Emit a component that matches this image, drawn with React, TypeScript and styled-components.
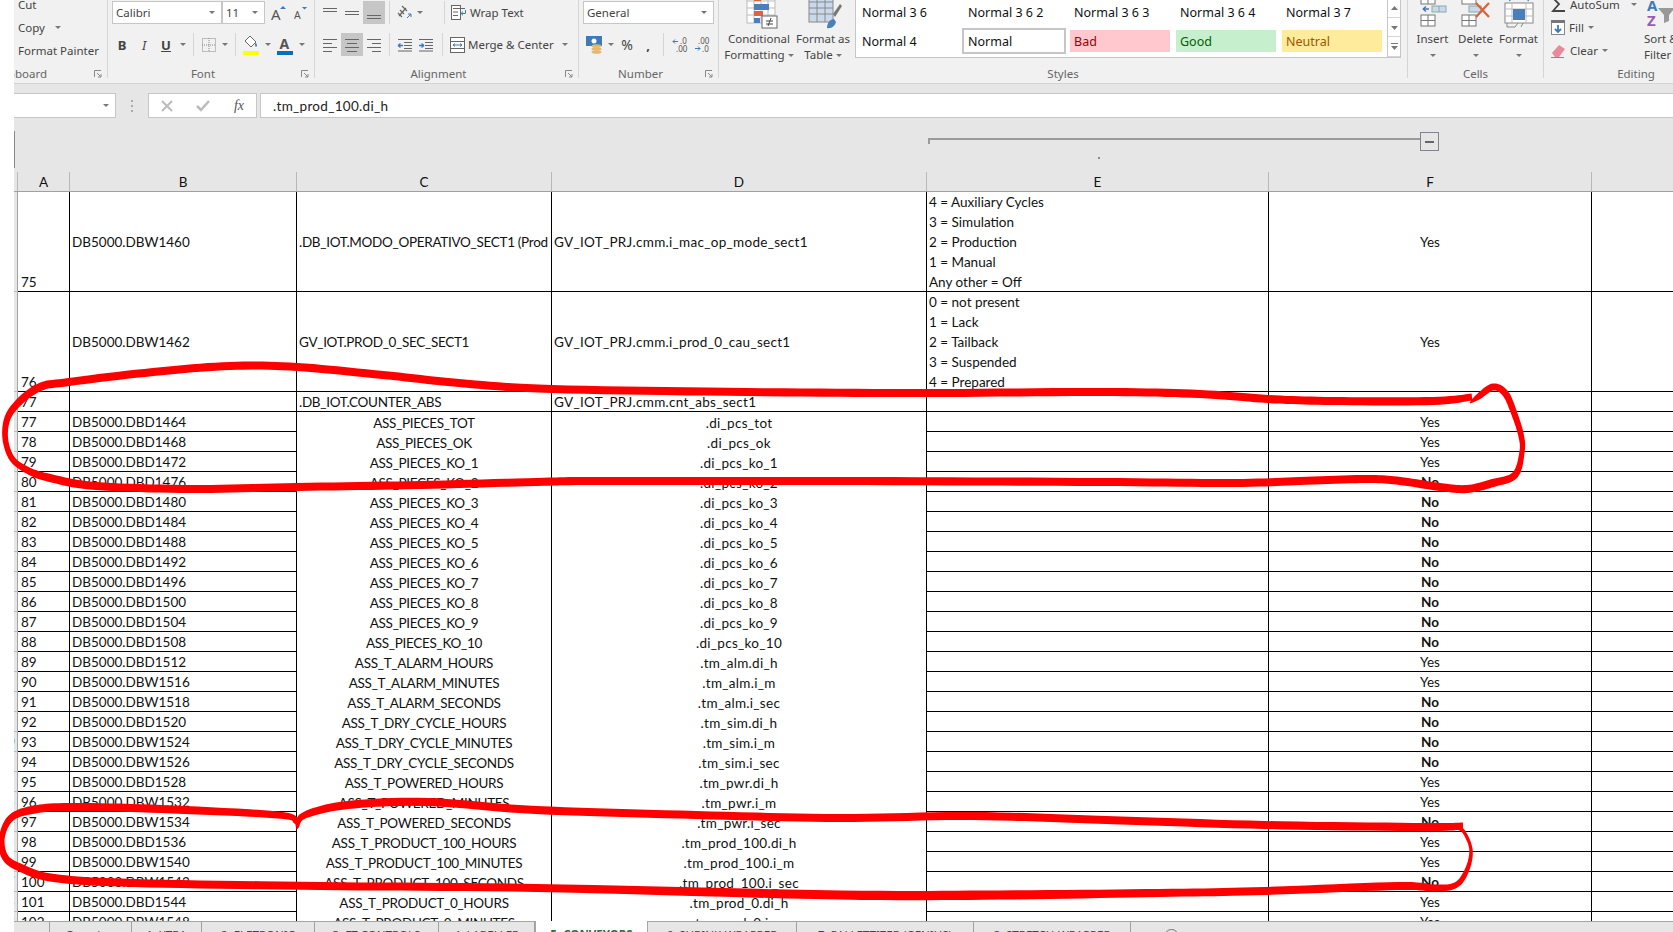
import React from "react";
import styled, { createGlobalStyle } from "styled-components";

const CELL_FONT = `"Lato", "Liberation Sans", sans-serif`;
const UI_FONT = `"Noto Sans", "Open Sans", sans-serif`;

const Global = createGlobalStyle`
  html, body { margin: 0; padding: 0; height: 932px; overflow: hidden; background: #fff; }
  * { box-sizing: border-box; }
`;

const App_ = styled.div`
  position: relative;
  width: 1673px;
  height: 943px;
  padding-left: 14px;
  display: flex;
  flex-direction: column;
  overflow: hidden;
  font-family: ${UI_FONT};
  font-size: 11.5px;
  color: #444;
`;

/* ---------- ribbon ---------- */
const Ribbon = styled.div`
  display: flex;
  height: 84px;
  background: #f1f1f1;
  border-bottom: 1px solid #d4d4d4;
  flex-shrink: 0;
  overflow: hidden;
`;
const Group = styled.section<{ $w: number; $last?: boolean }>`
  width: ${(p) => p.$w}px;
  height: 78px;
  flex-shrink: 0;
  display: flex;
  flex-direction: column;
  border-right: ${(p) => (p.$last ? "none" : "1px solid #d5d5d5")};
`;
const GroupBody = styled.div`
  flex: 1;
  min-height: 0;
  display: flex;
  overflow: hidden;
`;
const GroupLabel = styled.div<{ $launch?: boolean }>`
  height: 14px;
  margin-bottom: -3px;
  padding-right: ${(p) => (p.$launch ? 16 : 0)}px;
  display: grid;
  grid-template-columns: 1fr auto 1fr;
  align-items: center;
  color: #666;
  line-height: 14px;
  white-space: nowrap;
`;
const LabelText = styled.span`
  grid-column: 2;
`;
const ClippedLabel = styled.span`
  grid-column: 1 / 3;
  overflow: hidden;
  width: 33px;
  direction: rtl;
`;
const Launcher = styled.svg`
  grid-column: 3;
  justify-self: end;
  margin-right: -11px;
  width: 8px;
  height: 8px;
`;
const Column = styled.div<{ $ml?: number; $w?: number }>`
  display: flex;
  flex-direction: column;
  margin-left: ${(p) => p.$ml ?? 0}px;
  ${(p) => (p.$w ? `width: ${p.$w}px; flex-shrink: 0;` : "")}
`;
const ToolRow = styled.div<{ $mt?: number; $ml?: number }>`
  display: flex;
  align-items: center;
  height: 23px;
  margin-top: ${(p) => p.$mt ?? 0}px;
  margin-left: ${(p) => p.$ml ?? 0}px;
`;
const Tool = styled.span<{ $w?: number; $ml?: number; $on?: boolean }>`
  display: inline-flex;
  align-items: center;
  justify-content: center;
  flex-shrink: 0;
  height: 23px;
  width: ${(p) => (p.$w ? `${p.$w}px` : "auto")};
  margin-left: ${(p) => p.$ml ?? 0}px;
  background: ${(p) => (p.$on ? "#c6c6c6" : "transparent")};
  white-space: nowrap;
  color: #444;
`;
const Glyph = styled.span<{ $i?: boolean; $u?: boolean; $plain?: boolean }>`
  font-size: ${(p) => (p.$plain ? 14 : 13)}px;
  font-weight: ${(p) => (p.$i || p.$plain ? 400 : 700)};
  font-style: ${(p) => (p.$i ? "italic" : "normal")};
  text-decoration: ${(p) => (p.$u ? "underline" : "none")};
  color: #444;
`;
const Sep = styled.span<{ $ml?: number }>`
  width: 1px;
  height: 23px;
  flex-shrink: 0;
  margin-left: ${(p) => p.$ml ?? 0}px;
  background: #d5d5d5;
`;
const Caret = styled.span<{ $ml?: number }>`
  display: inline-block;
  flex-shrink: 0;
  width: 0;
  height: 0;
  margin-left: ${(p) => p.$ml ?? 0}px;
  border-left: 3px solid transparent;
  border-right: 3px solid transparent;
  border-top: 3px solid #777;
`;
const ComboBox = styled.div<{ $w: number; $ml?: number }>`
  width: ${(p) => p.$w}px;
  height: 23px;
  flex-shrink: 0;
  margin-left: ${(p) => p.$ml ?? 0}px;
  display: flex;
  align-items: center;
  justify-content: space-between;
  padding: 0 6px 0 3px;
  background: #fff;
  border: 1px solid #c6c6c6;
  color: #444;
`;
const ListRow = styled.div<{ $first?: boolean }>`
  display: flex;
  align-items: center;
  gap: 4px;
  height: 23px;
  margin-top: ${(p) => (p.$first ? -7 : 0)}px;
  white-space: nowrap;
`;
const LargeButton = styled.div<{ $w: number; $ml?: number; $left?: boolean }>`
  width: ${(p) => p.$w}px;
  margin-left: ${(p) => p.$ml ?? 0}px;
  flex-shrink: 0;
  display: flex;
  flex-direction: column;
  align-items: ${(p) => (p.$left ? "flex-start" : "center")};
  text-align: ${(p) => (p.$left ? "left" : "center")};
  line-height: 16px;
  white-space: nowrap;
`;
const LargeIcon = styled.svg`
  height: 31px;
  width: 40px;
  flex-shrink: 0;
`;
const SortSlot = styled.span`
  display: flex;
  height: 31px;
  margin-left: 3px;
  flex-shrink: 0;
`;
const CaretLine = styled.div`
  height: 16px;
  display: flex;
  align-items: center;
  justify-content: center;
  gap: 3px;
`;
const Gallery = styled.div`
  margin-left: 6px;
  width: 546px;
  height: 58px;
  flex-shrink: 0;
  display: flex;
  background: #fff;
  border-left: 1px solid #c6c6c6;
  border-bottom: 1px solid #c6c6c6;
`;
const GalleryGrid = styled.div`
  display: grid;
  grid-template-columns: repeat(5, 100px);
  grid-auto-rows: 22px;
  column-gap: 6px;
  row-gap: 7px;
  padding: 1px 0 0 2px;
`;
const StyleTile = styled.div<{ $bg?: string; $fg?: string; $sel?: boolean }>`
  display: flex;
  align-items: center;
  padding-left: 4px;
  font-size: 12.5px;
  background: ${(p) => p.$bg ?? "transparent"};
  color: ${(p) => p.$fg ?? "#111"};
  box-shadow: ${(p) => (p.$sel ? "0 0 0 2px #c6c6c6" : "none")};
  white-space: nowrap;
`;
const GalleryScroll = styled.div`
  margin-left: 5px;
  width: 15px;
  height: 57px;
  display: grid;
  grid-template-rows: 18px 19px 20px;
  border-left: 1px solid #c6c6c6;
  border-right: 1px solid #c6c6c6;
`;
const ScrollBtn = styled.div`
  display: flex;
  align-items: center;
  justify-content: center;
  border-bottom: 1px solid #d5d5d5;
`;

/* ---------- formula bar ---------- */
const FormulaRow = styled.div`
  display: flex;
  align-items: stretch;
  height: 34px;
  padding-top: 9px;
  flex-shrink: 0;
  background: #e6e6e6;
`;
const NameBox = styled.div`
  width: 102px;
  background: #fff;
  border: 1px solid #c6c6c6;
  border-left: none;
  display: flex;
  align-items: center;
  justify-content: flex-end;
  padding-right: 6px;
`;
const Grip = styled.div`
  width: 32px;
  display: flex;
  align-items: center;
  justify-content: center;
  flex-direction: column;
  gap: 3px;
`;
const GripDot = styled.span`
  width: 2px;
  height: 2px;
  background: #aaa;
`;
const FxBox = styled.div`
  width: 109px;
  background: #fff;
  border: 1px solid #c6c6c6;
  display: grid;
  grid-template-columns: repeat(3, 36px);
  align-items: center;
  justify-items: center;
`;
const FxText = styled.span`
  font-family: "Liberation Serif", serif;
  font-style: italic;
  font-size: 14px;
  color: #555;
`;
const FormulaInput = styled.div`
  flex: 1;
  margin-left: 3px;
  padding-left: 12px;
  background: #fff;
  border: 1px solid #c6c6c6;
  border-right: none;
  display: flex;
  align-items: center;
  font-family: ${CELL_FONT};
  font-size: 13.5px;
  letter-spacing: 0.3px;
  color: #222;
`;

/* ---------- outline ---------- */
const OutlineArea = styled.div`
  height: 54px;
  flex-shrink: 0;
  background: #e6e6e6;
  display: flex;
`;
const OutlineEdge = styled.div`
  width: 1px;
  height: 37px;
  margin-top: 13px;
  background: #8a8a8a;
  flex-shrink: 0;
`;
const OutlineTrack = styled.div`
  flex-shrink: 0;
  display: flex;
  flex-direction: column;
  margin-left: 913px;
  margin-top: 20px;
`;
const OutlineRule = styled.div`
  width: 492px;
  height: 6px;
  border-top: 2px solid #9a9a9a;
  border-left: 2px solid #9a9a9a;
`;
const OutlineDot = styled.span`
  width: 2px;
  height: 2px;
  margin: 13px 0 0 170px;
  background: #8c8c8c;
`;
const CollapseBtn = styled.div`
  width: 19px;
  height: 19px;
  margin-top: 14px;
  border: 1px solid #83838f;
  display: flex;
  align-items: center;
  justify-content: center;
`;
const Minus = styled.span`
  width: 9px;
  height: 2px;
  background: #666;
`;

/* ---------- sheet ---------- */
const COLS = "4px 52px 227px 255px 375px 342px 323px 82px";
const HeaderRow = styled.div`
  display: grid;
  grid-template-columns: ${COLS};
  height: 20px;
  flex-shrink: 0;
  background: #e6e6e6;
  border-bottom: 1px solid #a0a0a0;
  font-family: ${CELL_FONT};
  font-size: 13.5px;
  color: #111;
`;
const HeaderCell = styled.div`
  display: flex;
  align-items: center;
  justify-content: center;
  border-right: 1px solid #b8b8b8;
`;
const Sheet = styled.div`
  flex: 1;
  min-height: 0;
  overflow: hidden;
  background: #fff;
`;
const Row = styled.div<{ $h: number }>`
  display: grid;
  grid-template-columns: ${COLS};
  grid-template-rows: minmax(0, 1fr);
  height: ${(p) => p.$h}px;
  font-family: ${CELL_FONT};
  font-size: 13.5px;
  line-height: 17px;
  color: #111;
  background: #fff;
`;
const Strip = styled.div`
  background: #e6e6e6;
  border-right: 1px solid #a4a4a4;
  border-bottom: 1px solid #bcbcbc;
  overflow: hidden;
  font-size: 13px;
  line-height: 19px;
  text-indent: -7px;
  color: #222;
`;
const RowNo = styled.div`
  display: flex;
  align-items: flex-end;
  padding-left: 3px;
  line-height: 18px;
  border-right: 1px solid #000;
  border-bottom: 1px solid #000;
`;
const Cell = styled.div<{ $center?: boolean; $open?: boolean; $track?: number }>`
  display: flex;
  align-items: center;
  justify-content: ${(p) => (p.$center ? "center" : "flex-start")};
  padding: ${(p) => (p.$center ? "2px 0 0" : "2px 0 0 2px")};
  border-right: 1px solid #000;
  border-bottom: ${(p) => (p.$open ? "none" : "1px solid #000")};
  overflow: hidden;
  white-space: nowrap;
  min-width: 0;
  letter-spacing: ${(p) => p.$track ?? 0}px;
`;
const NoteCell = styled.div`
  display: flex;
  flex-direction: column;
  align-items: flex-start;
  padding-left: 2px;
  line-height: 20px;
  border-right: 1px solid #000;
  border-bottom: 1px solid #000;
  overflow: hidden;
  white-space: nowrap;
`;
const Blank = styled.div`
  border-bottom: 1px solid #000;
`;
const Answer = styled.span<{ $no?: boolean }>`
  font-weight: ${(p) => (p.$no ? 700 : 400)};
`;

/* ---------- tabs ---------- */
const TabBar = styled.div`
  height: 22px;
  flex-shrink: 0;
  display: flex;
  background: #e6e6e6;
  border-top: 1px solid #a6a6a6;
  font-size: 11.5px;
  color: #444;
`;
const Tab = styled.div<{ $w: number; $active?: boolean }>`
  width: ${(p) => p.$w}px;
  flex-shrink: 0;
  display: flex;
  justify-content: center;
  padding-top: ${(p) => (p.$active ? 6 : 5)}px;
  margin-top: ${(p) => (p.$active ? -1 : 0)}px;
  line-height: 16px;
  white-space: nowrap;
  background: ${(p) => (p.$active ? "#fff" : "transparent")};
  color: ${(p) => (p.$active ? "#217346" : "#444")};
  font-weight: ${(p) => (p.$active ? 700 : 400)};
  border-left: ${(p) => (p.$active ? "1px solid #a6a6a6" : "none")};
  border-right: 1px solid ${(p) => (p.$active ? "#a6a6a6" : "#a0a0a0")};
`;
const AddSheet = styled.span`
  width: 15px;
  height: 15px;
  margin: 7px 0 0 33px;
  border: 1px solid #777;
  border-radius: 50%;
  flex-shrink: 0;
`;

/* ---------- ink ---------- */
const Ink = styled.svg`
  position: absolute;
  left: 0;
  top: 0;
  width: 1673px;
  height: 932px;
  pointer-events: none;
`;

/* ---------- icons ---------- */
const Lines = ({ ys, xs }: { ys: number[]; xs: [number, number][] }) => (
  <svg width="16" height="16" viewBox="0 0 16 16" fill="none" stroke="#666" strokeWidth="1">
    {ys.map((y, i) => (
      <line key={i} x1={xs[i][0]} x2={xs[i][1]} y1={y + 0.5} y2={y + 0.5} />
    ))}
  </svg>
);
const wide: [number, number][] = [[1, 15], [1, 15], [1, 15]];
const leftAl: [number, number][] = [[1, 15], [1, 10], [1, 15], [1, 10]];
const centerAl: [number, number][] = [[1, 15], [3, 13], [1, 15], [3, 13]];
const rightAl: [number, number][] = [[1, 15], [6, 15], [1, 15], [6, 15]];

const GrowFont = ({ down }: { down?: boolean }) => (
  <svg width="16" height="18" viewBox="0 0 16 18">
    <text x="0" y="16" fontFamily="Noto Sans" fontSize={down ? 12 : 15} fill="#555">A</text>
    <path d={down ? "M9 2h6l-3 3z" : "M9 5h6l-3-3z"} fill="#3f7ab8" />
  </svg>
);
const BorderIcon = () => (
  <svg width="14" height="14" viewBox="0 0 14 14" fill="none" stroke="#888" strokeDasharray="1 1">
    <rect x=".5" y=".5" width="13" height="13" />
    <path d="M7 0v14M0 7h14" />
  </svg>
);
const FillIcon = () => (
  <svg width="16" height="20" viewBox="0 0 16 20">
    <path d="M7 1l6 6-5 5-6-6z" fill="#fff" stroke="#666" />
    <path d="M12.500 7.500c1.500 2 2 3 1 4s-2-1-1-4z" fill="#3f7ab8" />
    <rect x="0" y="16" width="16" height="4" fill="#ffff00" />
  </svg>
);
const ColorA = () => (
  <svg width="16" height="20" viewBox="0 0 16 20">
    <text x="2.500" y="14" fontFamily="Noto Sans" fontWeight="700" fontSize="14" fill="#555">A</text>
    <rect x="0" y="16" width="16" height="4" fill="#0a6ebd" />
  </svg>
);
const Orient = () => (
  <svg width="16" height="16" viewBox="0 0 16 16" fill="none" stroke="#666">
    <path d="M2 11L9 3M5 1l5 5" strokeWidth="1.200" />
    <path d="M3 5l4 4M1 8l4 4" strokeWidth="1.200" />
    <path d="M10 13l4-4m0 0h-3m3 0v3" stroke="#3f7ab8" />
  </svg>
);
const Indent = ({ out }: { out?: boolean }) => (
  <svg width="16" height="14" viewBox="0 0 16 14" fill="none" stroke="#666">
    <path d="M1 1.500h14M7 4.500h8M7 7.500h8M7 10.500h8M1 13h14" />
    <path d={out ? "M1 7.500h5M1 7.500l2.500-2M1 7.500l2.500 2" : "M1 7.500h5M6 7.500l-2.500-2M6 7.500l-2.500 2"} stroke="#3f7ab8" strokeWidth="1.300" />
  </svg>
);
const WrapIcon = () => (
  <svg width="16" height="15" viewBox="0 0 16 15" fill="none" stroke="#666">
    <rect x=".5" y=".5" width="9" height="14" fill="#fff" />
    <path d="M2 3.500h12M2 7h5M2 10.500h5" />
    <path d="M14.500 5v3.500H10m0 0l2-1.800M10 8.500l2 1.800" stroke="#3f7ab8" />
  </svg>
);
const MergeIcon = () => (
  <svg width="15" height="16" viewBox="0 0 15 16" fill="none" stroke="#666">
    <rect x=".5" y=".5" width="14" height="15" fill="#fff" />
    <path d="M.5 4.500h14M.5 11.500h14" />
    <path d="M3 8h9M3 8l2-1.500M3 8l2 1.500M12 8l-2-1.500M12 8l-2 1.500" stroke="#3f7ab8" />
  </svg>
);
const MoneyIcon = () => (
  <svg width="17" height="18" viewBox="0 0 17 18">
    <rect x="0" y="0" width="16" height="10" fill="#3f7ab8" />
    <circle cx="8" cy="5" r="2.500" fill="#fff" />
    <ellipse cx="10.500" cy="10" rx="5" ry="1.800" fill="#e8b86a" />
    <ellipse cx="10.500" cy="13" rx="5" ry="1.800" fill="#e8b86a" />
    <ellipse cx="10.500" cy="16" rx="5" ry="1.800" fill="#e8b86a" />
  </svg>
);
const DecIcon = ({ flip }: { flip?: boolean }) => (
  <svg width="16" height="16" viewBox="0 0 16 16" fontFamily="Noto Sans" fontSize="8" fill="#555">
    {flip ? (
      <>
        <text x="4" y="7">.00</text>
        <text x="8" y="15">.0</text>
        <path d="M1 11.500h5M6 11.500l-2-2M6 11.500l-2 2" stroke="#3f7ab8" fill="none" />
      </>
    ) : (
      <>
        <text x="8" y="7">.0</text>
        <text x="4" y="15">.00</text>
        <path d="M1 4.500h5M1 4.500l2-2M1 4.500l2 2" stroke="#3f7ab8" fill="none" />
      </>
    )}
  </svg>
);
const ScrollGlyph = ({ kind }: { kind: "up" | "down" | "more" }) => (
  <svg width="9" height="9" viewBox="0 0 9 9" fill="#777">
    {kind === "up" && <path d="M1 6h7L4.500 2z" />}
    {kind === "down" && <path d="M1 3h7L4.500 7z" />}
    {kind === "more" && (
      <>
        <path d="M1 1h7v1H1z" />
        <path d="M1 4h7L4.500 8z" />
      </>
    )}
  </svg>
);
const LauncherGlyph = () => (
  <Launcher viewBox="0 0 8 8" fill="none" stroke="#888">
    <path d="M.5 7V.5H7" />
    <path d="M3 3l4 4M7 4v3H4" />
  </Launcher>
);
const CondIcon = () => (
  <LargeIcon viewBox="0 0 40 31">
    <g fill="#fff" stroke="#bbb">
      <rect x="8" y="-6" width="28" height="29" />
      <path d="M15 -6v29M22 -6v29M29 -6v29M8 1h28M8 8h28M8 15h28" />
    </g>
    <rect x="15" y="-5" width="7" height="6" fill="#e0633c" />
    <rect x="15" y="4" width="15" height="6" fill="#4a7fbc" />
    <rect x="15" y="11" width="9" height="5" fill="#e0633c" />
    <rect x="15" y="18" width="6" height="5" fill="#4a7fbc" />
    <rect x="23" y="16" width="15" height="12" fill="#fff" stroke="#666" />
    <path d="M27 21h7M27 24h7M32 18l-3 8" stroke="#444" fill="none" />
  </LargeIcon>
);
const TableIcon = () => (
  <LargeIcon viewBox="0 0 40 31">
    <rect x="6" y="-4" width="24" height="26" fill="#c9d9ec" stroke="#888" />
    <path d="M6 2h24M6 8h24M6 14h24M14 -4v26M22 -4v26" stroke="#888" fill="none" />
    <path d="M30 14l7-10 2 2-7 11z" fill="#777" />
    <path d="M24 28c0-6 4-9 7-9l2 3c-1 4-5 7-9 6z" fill="#4a7fbc" />
  </LargeIcon>
);
const InsertIcon = () => (
  <LargeIcon viewBox="0 0 40 31">
    <g fill="#fff" stroke="#777">
      <rect x="8" y="-6" width="14" height="10" />
      <path d="M15 -6v10" />
      <rect x="8" y="15" width="14" height="11" />
      <path d="M15 15v11M8 20.500h14" />
    </g>
    <rect x="19" y="6" width="14" height="6" fill="#c9d9ec" stroke="#8aa" />
    <path d="M26 6v6" stroke="#8aa" />
    <path d="M10 9h6M10 9l3-2.500M10 9l3 2.500" stroke="#3f7ab8" strokeWidth="1.500" fill="none" />
  </LargeIcon>
);
const DeleteIcon = () => (
  <LargeIcon viewBox="0 0 40 31">
    <g fill="#fff" stroke="#777">
      <rect x="6" y="-6" width="14" height="10" />
      <rect x="6" y="15" width="14" height="11" />
      <path d="M13 15v11M6 20.500h14" />
    </g>
    <rect x="13" y="6" width="12" height="6" fill="#c9d9ec" stroke="#8aa" />
    <path d="M20 3l13 14M33 3L20 17" stroke="#d9603a" strokeWidth="2.200" />
  </LargeIcon>
);
const FormatIcon = () => (
  <LargeIcon viewBox="0 0 40 31">
    <rect x="6" y="3" width="28" height="20" fill="#fff" stroke="#888" />
    <path d="M13 3v20M27 3v20M6 9h28M6 16h28" stroke="#bbb" />
    <rect x="14" y="9" width="12" height="11" fill="#4a7fbc" />
    <path d="M10 1l3-2M30 1l-3-2" stroke="#3f7ab8" />
    <path d="M8 23v4h8l3-4M24 23l-2 4" fill="none" stroke="#888" />
  </LargeIcon>
);
const SigmaIcon = () => (
  <svg width="15" height="15" viewBox="0 0 15 15" fill="none" stroke="#444" strokeWidth="1.800">
    <path d="M14 1H2l6 6-6 7h12" />
  </svg>
);
const FillDown = () => (
  <svg width="14" height="15" viewBox="0 0 14 15">
    <rect x=".5" y=".5" width="13" height="14" fill="#fff" stroke="#888" />
    <rect x="0" y="0" width="14" height="3" fill="#777" />
    <path d="M7 5v7M4 9l3 3 3-3" stroke="#3f7ab8" strokeWidth="1.800" fill="none" />
  </svg>
);
const Eraser = () => (
  <svg width="15" height="14" viewBox="0 0 15 14">
    <path d="M1 9l7-8 6 4-6 8H4z" fill="#e88a9a" />
    <path d="M0 13.500h13" stroke="#888" />
  </svg>
);
const SortIcon = () => (
  <svg width="30" height="27" viewBox="0 0 30 27" fontFamily="Noto Sans" fontWeight="700" fontSize="15">
    <text x="0" y="11" fill="#3f7ab8">A</text>
    <text x="0" y="26" fill="#9b59b6">Z</text>
    <path d="M11 8h17l-6 7v6l-5 2v-8z" fill="#999" />
  </svg>
);
const SmallX = () => (
  <svg width="12" height="12" viewBox="0 0 12 12" stroke="#bbb" strokeWidth="2" fill="none">
    <path d="M1 1l10 10M11 1L1 11" />
  </svg>
);
const SmallCheck = () => (
  <svg width="14" height="12" viewBox="0 0 14 12" stroke="#bbb" strokeWidth="2.500" fill="none">
    <path d="M1 6l4 4 8-9" />
  </svg>
);

/* ---------- ink strokes ---------- */
type P = [number, number, number];

function ribbonPath(points: P[]): string {
  const samples: P[] = [];
  for (let i = 0; i < points.length - 1; i++) {
    const p0 = points[Math.max(i - 1, 0)];
    const p1 = points[i];
    const p2 = points[i + 1];
    const p3 = points[Math.min(i + 2, points.length - 1)];
    for (let s = 0; s < 10; s++) {
      const t = s / 10;
      const t2 = t * t;
      const t3 = t2 * t;
      const f = (k: number) =>
        0.5 *
        (2 * p1[k] +
          (-p0[k] + p2[k]) * t +
          (2 * p0[k] - 5 * p1[k] + 4 * p2[k] - p3[k]) * t2 +
          (-p0[k] + 3 * p1[k] - 3 * p2[k] + p3[k]) * t3);
      samples.push([f(0), f(1), f(2)]);
    }
  }
  samples.push(points[points.length - 1]);
  const left: string[] = [];
  const right: string[] = [];
  samples.forEach((p, i) => {
    const a = samples[Math.max(i - 1, 0)];
    const b = samples[Math.min(i + 1, samples.length - 1)];
    const dx = b[0] - a[0];
    const dy = b[1] - a[1];
    const len = Math.hypot(dx, dy) || 1;
    const w = p[2] * 1.15;
    const nx = (-dy / len) * (w / 2);
    const ny = (dx / len) * (w / 2);
    left.push(`${(p[0] + nx).toFixed(1)} ${(p[1] + ny).toFixed(1)}`);
    right.unshift(`${(p[0] - nx).toFixed(1)} ${(p[1] - ny).toFixed(1)}`);
  });
  return `M${left.join("L")}L${right.join("L")}Z`;
}

const upperLoop: P[] = [
  [1470, 403, 1], [1478, 397, 5], [1493, 387, 6], [1505, 393, 6], [1513, 410, 5.5], [1521, 435, 5], [1522, 452, 4.5],
  [1515, 475, 6], [1493, 483, 7], [1467, 489, 7], [1440, 487, 7], [1400, 481, 7], [1367, 479, 7], [1300, 481, 7],
  [1233, 483, 7], [1100, 482, 7], [840, 481, 7], [600, 481, 7], [536, 482, 7], [421, 485, 7], [297, 487, 7],
  [191, 489, 7], [96, 486, 7], [50, 478, 7], [27, 470, 6], [11, 457, 5], [5, 433, 5], [12, 410, 6],
  [38, 388, 7], [69, 382, 7], [153, 372, 7], [230, 366, 7], [297, 367, 7], [383, 375, 7], [459, 383, 7],
  [552, 389, 7], [747, 392, 7], [926, 393, 7], [1100, 392, 7], [1200, 394, 7], [1268, 399, 7], [1333, 401, 7], [1433, 401, 7], [1472, 397, 6],
];
const lowerLoop: P[] = [
  [297, 829, 1], [296, 822, 4], [278, 815, 6], [161, 809, 7], [70, 807, 7], [32, 810, 7], [11, 818, 6], [2, 837, 5],
  [5, 857, 6], [21, 868, 7], [54, 878, 7], [134, 883, 7], [321, 886, 7], [536, 888, 7], [840, 895, 8], [999, 895, 8],
  [1159, 893, 7], [1265, 891, 7], [1398, 886, 7], [1435, 888, 6], [1456, 885, 5], [1467, 870, 4], [1471, 850, 3], [1464, 832, 3], [1456, 827, 4],
];
const lowerTop: P[] = [
  [1463, 826, 6], [1424, 827, 7], [1265, 825, 7], [1106, 820, 7], [973, 816, 7], [840, 818, 7], [696, 815, 7],
  [536, 810, 7], [428, 802, 7], [348, 805, 7], [305, 815, 6], [297, 827, 3],
];

/* ---------- data ---------- */
type D = [string, string, string, string, boolean];
const rows: D[] = [
  ["77", "DB5000.DBD1464", "ASS_PIECES_TOT", ".di_pcs_tot", false],
  ["78", "DB5000.DBD1468", "ASS_PIECES_OK", ".di_pcs_ok", false],
  ["79", "DB5000.DBD1472", "ASS_PIECES_KO_1", ".di_pcs_ko_1", false],
  ["80", "DB5000.DBD1476", "ASS_PIECES_KO_2", ".di_pcs_ko_2", true],
  ["81", "DB5000.DBD1480", "ASS_PIECES_KO_3", ".di_pcs_ko_3", true],
  ["82", "DB5000.DBD1484", "ASS_PIECES_KO_4", ".di_pcs_ko_4", true],
  ["83", "DB5000.DBD1488", "ASS_PIECES_KO_5", ".di_pcs_ko_5", true],
  ["84", "DB5000.DBD1492", "ASS_PIECES_KO_6", ".di_pcs_ko_6", true],
  ["85", "DB5000.DBD1496", "ASS_PIECES_KO_7", ".di_pcs_ko_7", true],
  ["86", "DB5000.DBD1500", "ASS_PIECES_KO_8", ".di_pcs_ko_8", true],
  ["87", "DB5000.DBD1504", "ASS_PIECES_KO_9", ".di_pcs_ko_9", true],
  ["88", "DB5000.DBD1508", "ASS_PIECES_KO_10", ".di_pcs_ko_10", true],
  ["89", "DB5000.DBD1512", "ASS_T_ALARM_HOURS", ".tm_alm.di_h", false],
  ["90", "DB5000.DBW1516", "ASS_T_ALARM_MINUTES", ".tm_alm.i_m", false],
  ["91", "DB5000.DBW1518", "ASS_T_ALARM_SECONDS", ".tm_alm.i_sec", true],
  ["92", "DB5000.DBD1520", "ASS_T_DRY_CYCLE_HOURS", ".tm_sim.di_h", true],
  ["93", "DB5000.DBW1524", "ASS_T_DRY_CYCLE_MINUTES", ".tm_sim.i_m", true],
  ["94", "DB5000.DBW1526", "ASS_T_DRY_CYCLE_SECONDS", ".tm_sim.i_sec", true],
  ["95", "DB5000.DBD1528", "ASS_T_POWERED_HOURS", ".tm_pwr.di_h", false],
  ["96", "DB5000.DBW1532", "ASS_T_POWERED_MINUTES", ".tm_pwr.i_m", false],
  ["97", "DB5000.DBW1534", "ASS_T_POWERED_SECONDS", ".tm_pwr.i_sec", true],
  ["98", "DB5000.DBD1536", "ASS_T_PRODUCT_100_HOURS", ".tm_prod_100.di_h", false],
  ["99", "DB5000.DBW1540", "ASS_T_PRODUCT_100_MINUTES", ".tm_prod_100.i_m", false],
  ["100", "DB5000.DBW1542", "ASS_T_PRODUCT_100_SECONDS", ".tm_prod_100.i_sec", true],
  ["101", "DB5000.DBD1544", "ASS_T_PRODUCT_0_HOURS", ".tm_prod_0.di_h", false],
  ["102", "DB5000.DBW1548", "ASS_T_PRODUCT_0_MINUTES", ".tm_prod_0.i_m", false],
];
const stripDigit: Record<string, string> = { "93": "0", "96": "3", "97": "4", "98": "5", "99": "6", "100": "7", "101": "8", "102": "9" };

const tabs: [string, number, boolean?][] = [
  ["", 36],
  ["Overview", 82],
  ["1. XTRA", 70],
  ["2. ELETRONIC", 113],
  ["3. FT-CONTROLS", 124],
  ["4. LABELLER", 96],
  ["5. CONVEYORS", 113, true],
  ["6. SHRINK-WRAPPER", 149],
  ["7. PALLETTIZER (GENIUS)", 177],
  ["8. STRETCH-WRAPPER", 157],
];

const styleTiles: { t: string; bg?: string; fg?: string; sel?: boolean }[] = [
  { t: "Normal 3 6" },
  { t: "Normal 3 6 2" },
  { t: "Normal 3 6 3" },
  { t: "Normal 3 6 4" },
  { t: "Normal 3 7" },
  { t: "Normal 4" },
  { t: "Normal", sel: true },
  { t: "Bad", bg: "#ffc7ce", fg: "#9c0006" },
  { t: "Good", bg: "#c6efce", fg: "#006100" },
  { t: "Neutral", bg: "#ffeb9c", fg: "#9c5700" },
];

const NAME_TRACK = -0.3;
const TAG_TRACK = 0.3;

export default function App() {
  return (
    <App_>
      <Global />
      <Ribbon>
        <Group $w={94}>
          <GroupBody>
            <Column $ml={4}>
              <ListRow $first>Cut</ListRow>
              <ListRow>Copy<Caret $ml={6} /></ListRow>
              <ListRow>Format Painter</ListRow>
            </Column>
          </GroupBody>
          <GroupLabel $launch>
            <ClippedLabel>Clipboard</ClippedLabel>
            <LauncherGlyph />
          </GroupLabel>
        </Group>

        <Group $w={207}>
          <GroupBody>
            <Column $ml={4}>
              <ToolRow $mt={1}>
                <ComboBox $w={110}>Calibri<Caret /></ComboBox>
                <ComboBox $w={43}>11<Caret /></ComboBox>
                <Tool $w={16} $ml={6}><GrowFont /></Tool>
                <Tool $w={14} $ml={7}><GrowFont down /></Tool>
              </ToolRow>
              <ToolRow $mt={9} $ml={3}>
                <Tool $w={14}><Glyph>B</Glyph></Tool>
                <Tool $w={14} $ml={8}><Glyph $i>I</Glyph></Tool>
                <Tool $w={14} $ml={8}><Glyph $u>U</Glyph></Tool>
                <Caret $ml={7} />
                <Sep $ml={7} />
                <Tool $w={14} $ml={8}><BorderIcon /></Tool>
                <Caret $ml={6} />
                <Sep $ml={7} />
                <Tool $w={16} $ml={7}><FillIcon /></Tool>
                <Caret $ml={6} />
                <Tool $w={16} $ml={6}><ColorA /></Tool>
                <Caret $ml={6} />
              </ToolRow>
            </Column>
          </GroupBody>
          <GroupLabel $launch>
            <LabelText>Font</LabelText>
            <LauncherGlyph />
          </GroupLabel>
        </Group>

        <Group $w={264}>
          <GroupBody>
            <Column $ml={4}>
              <ToolRow $mt={1}>
                <Tool $w={22}><Lines ys={[3, 6]} xs={wide} /></Tool>
                <Tool $w={22}><Lines ys={[6, 9]} xs={wide} /></Tool>
                <Tool $w={22} $on><Lines ys={[10, 13]} xs={wide} /></Tool>
                <Sep $ml={4} />
                <Tool $w={16} $ml={7}><Orient /></Tool>
                <Caret $ml={4} />
                <Sep $ml={21} />
                <Tool $w={16} $ml={6}><WrapIcon /></Tool>
                <Tool $ml={3}>Wrap Text</Tool>
              </ToolRow>
              <ToolRow $mt={9}>
                <Tool $w={22}><Lines ys={[2, 6, 10, 14]} xs={leftAl} /></Tool>
                <Tool $w={22} $on><Lines ys={[2, 6, 10, 14]} xs={centerAl} /></Tool>
                <Tool $w={22}><Lines ys={[2, 6, 10, 14]} xs={rightAl} /></Tool>
                <Sep $ml={4} />
                <Tool $w={16} $ml={7}><Indent out /></Tool>
                <Tool $w={16} $ml={5}><Indent /></Tool>
                <Sep $ml={8} />
                <Tool $w={16} $ml={6}><MergeIcon /></Tool>
                <Tool $ml={3}>Merge &amp; Center</Tool>
                <Caret $ml={8} />
              </ToolRow>
            </Column>
          </GroupBody>
          <GroupLabel $launch>
            <LabelText>Alignment</LabelText>
            <LauncherGlyph />
          </GroupLabel>
        </Group>

        <Group $w={140}>
          <GroupBody>
            <Column $ml={4}>
              <ToolRow $mt={1}>
                <ComboBox $w={131}>General<Caret /></ComboBox>
              </ToolRow>
              <ToolRow $mt={9} $ml={3}>
                <Tool $w={17}><MoneyIcon /></Tool>
                <Caret $ml={5} />
                <Tool $w={14} $ml={6}><Glyph $plain>%</Glyph></Tool>
                <Tool $w={6} $ml={11}><Glyph>,</Glyph></Tool>
                <Sep $ml={12} />
                <Tool $w={16} $ml={8}><DecIcon /></Tool>
                <Tool $w={16} $ml={6}><DecIcon flip /></Tool>
              </ToolRow>
            </Column>
          </GroupBody>
          <GroupLabel $launch>
            <LabelText>Number</LabelText>
            <LauncherGlyph />
          </GroupLabel>
        </Group>

        <Group $w={689}>
          <GroupBody>
            <LargeButton $w={62} $ml={9}>
              <CondIcon />
              <span>Conditional</span>
              <CaretLine>Formatting<Caret /></CaretLine>
            </LargeButton>
            <LargeButton $w={52} $ml={7}>
              <TableIcon />
              <span>Format as</span>
              <CaretLine>Table<Caret /></CaretLine>
            </LargeButton>
            <Gallery>
              <GalleryGrid>
                {styleTiles.map((s) => (
                  <StyleTile key={s.t} $bg={s.bg} $fg={s.fg} $sel={s.sel}>{s.t}</StyleTile>
                ))}
              </GalleryGrid>
              <GalleryScroll>
                <ScrollBtn><ScrollGlyph kind="up" /></ScrollBtn>
                <ScrollBtn><ScrollGlyph kind="down" /></ScrollBtn>
                <ScrollBtn><ScrollGlyph kind="more" /></ScrollBtn>
              </GalleryScroll>
            </Gallery>
          </GroupBody>
          <GroupLabel><LabelText>Styles</LabelText></GroupLabel>
        </Group>

        <Group $w={136}>
          <GroupBody>
            <LargeButton $w={43} $ml={3}>
              <InsertIcon />
              <span>Insert</span>
              <CaretLine><Caret /></CaretLine>
            </LargeButton>
            <LargeButton $w={43}>
              <DeleteIcon />
              <span>Delete</span>
              <CaretLine><Caret /></CaretLine>
            </LargeButton>
            <LargeButton $w={43}>
              <FormatIcon />
              <span>Format</span>
              <CaretLine><Caret /></CaretLine>
            </LargeButton>
          </GroupBody>
          <GroupLabel><LabelText>Cells</LabelText></GroupLabel>
        </Group>

        <Group $w={184} $last>
          <GroupBody>
            <Column $ml={7} $w={93}>
              <ListRow $first><SigmaIcon />AutoSum<Caret $ml={7} /></ListRow>
              <ListRow><FillDown />Fill<Caret /></ListRow>
              <ListRow><Eraser />Clear<Caret /></ListRow>
            </Column>
            <LargeButton $w={60} $left>
              <SortSlot><SortIcon /></SortSlot>
              <span>Sort &amp;</span>
              <span>Filter</span>
            </LargeButton>
          </GroupBody>
          <GroupLabel><LabelText>Editing</LabelText></GroupLabel>
        </Group>
      </Ribbon>

      <FormulaRow>
        <NameBox><Caret /></NameBox>
        <Grip><GripDot /><GripDot /><GripDot /></Grip>
        <FxBox>
          <SmallX />
          <SmallCheck />
          <FxText>fx</FxText>
        </FxBox>
        <FormulaInput>.tm_prod_100.di_h</FormulaInput>
      </FormulaRow>

      <OutlineArea>
        <OutlineEdge />
        <OutlineTrack>
          <OutlineRule />
          <OutlineDot />
        </OutlineTrack>
        <CollapseBtn><Minus /></CollapseBtn>
      </OutlineArea>

      <HeaderRow>
        <HeaderCell />
        {["A", "B", "C", "D", "E", "F"].map((c) => (
          <HeaderCell key={c}>{c}</HeaderCell>
        ))}
        <div />
      </HeaderRow>

      <Sheet>
        <Row $h={100}>
          <Strip />
          <RowNo>75</RowNo>
          <Cell>DB5000.DBW1460</Cell>
          <Cell $track={NAME_TRACK}>.DB_IOT.MODO_OPERATIVO_SECT1 (Prod</Cell>
          <Cell $track={TAG_TRACK}>GV_IOT_PRJ.cmm.i_mac_op_mode_sect1</Cell>
          <NoteCell>
            <span>4 = Auxiliary Cycles</span>
            <span>3 = Simulation</span>
            <span>2 = Production</span>
            <span>1 = Manual</span>
            <span>Any other = Off</span>
          </NoteCell>
          <Cell $center><Answer>Yes</Answer></Cell>
          <Blank />
        </Row>
        <Row $h={100}>
          <Strip />
          <RowNo>76</RowNo>
          <Cell>DB5000.DBW1462</Cell>
          <Cell $track={NAME_TRACK}>GV_IOT.PROD_0_SEC_SECT1</Cell>
          <Cell $track={TAG_TRACK}>GV_IOT_PRJ.cmm.i_prod_0_cau_sect1</Cell>
          <NoteCell>
            <span>0 = not present</span>
            <span>1 = Lack</span>
            <span>2 = Tailback</span>
            <span>3 = Suspended</span>
            <span>4 = Prepared</span>
          </NoteCell>
          <Cell $center><Answer>Yes</Answer></Cell>
          <Blank />
        </Row>
        <Row $h={20}>
          <Strip />
          <RowNo>77</RowNo>
          <Cell />
          <Cell $track={NAME_TRACK}>.DB_IOT.COUNTER_ABS</Cell>
          <Cell $track={TAG_TRACK}>GV_IOT_PRJ.cmm.cnt_abs_sect1</Cell>
          <Cell />
          <Cell />
          <Blank />
        </Row>
        {rows.map(([n, addr, name, tag, no]) => (
          <Row $h={20} key={n}>
            <Strip>{stripDigit[n] ?? ""}</Strip>
            <RowNo>{n}</RowNo>
            <Cell>{addr}</Cell>
            <Cell $center $open $track={NAME_TRACK}>{name}</Cell>
            <Cell $center $open $track={TAG_TRACK}>{tag}</Cell>
            <Cell />
            <Cell $center><Answer $no={no}>{no ? "No" : "Yes"}</Answer></Cell>
            <Blank />
          </Row>
        ))}
      </Sheet>

      <TabBar>
        {tabs.map(([t, w, active]) => (
          <Tab key={t || "nav"} $w={w} $active={active}>{t}</Tab>
        ))}
        <AddSheet />
      </TabBar>

      <Ink viewBox="0 0 1673 932">
        <path d={ribbonPath(upperLoop)} fill="#ff0000" />
        <path d={ribbonPath(lowerLoop)} fill="#ff0000" />
        <path d={ribbonPath(lowerTop)} fill="#ff0000" />
      </Ink>
    </App_>
  );
}
